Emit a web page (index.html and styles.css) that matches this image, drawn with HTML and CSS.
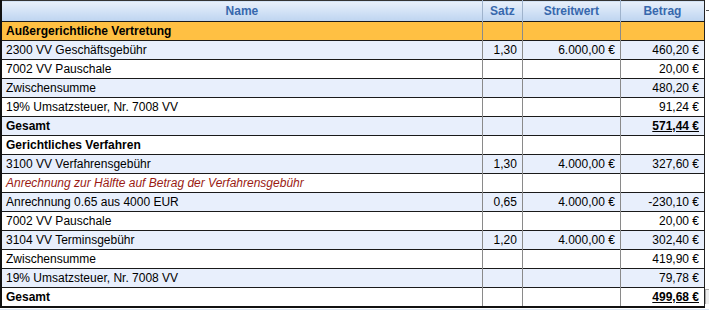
FILE: index.html
```html
<!DOCTYPE html>
<html>
<head>
<meta charset="utf-8">
<link rel="stylesheet" href="styles.css">
</head>
<body>
<div class="frame">
  <table class="grid">
    <colgroup>
      <col class="c-name"><col class="c-satz"><col class="c-wert"><col class="c-betrag">
    </colgroup>
    <thead>
      <tr><th>Name</th><th>Satz</th><th>Streitwert</th><th>Betrag</th></tr>
    </thead>
    <tbody>
      <tr class="group"><td>Außergerichtliche Vertretung</td><td></td><td></td><td></td></tr>
      <tr class="alt"><td>2300 VV Geschäftsgebühr</td><td class="num">1,30</td><td class="num">6.000,00 €</td><td class="num">460,20 €</td></tr>
      <tr><td>7002 VV Pauschale</td><td></td><td></td><td class="num">20,00 €</td></tr>
      <tr class="alt"><td>Zwischensumme</td><td></td><td></td><td class="num">480,20 €</td></tr>
      <tr><td>19% Umsatzsteuer, Nr. 7008 VV</td><td></td><td></td><td class="num">91,24 €</td></tr>
      <tr class="alt total"><td>Gesamt</td><td></td><td></td><td class="num"><u>571,44 €</u></td></tr>
      <tr class="total"><td>Gerichtliches Verfahren</td><td></td><td></td><td></td></tr>
      <tr class="alt"><td>3100 VV Verfahrensgebühr</td><td class="num">1,30</td><td class="num">4.000,00 €</td><td class="num">327,60 €</td></tr>
      <tr class="note"><td>Anrechnung zur Hälfte auf Betrag der Verfahrensgebühr</td><td></td><td></td><td></td></tr>
      <tr class="alt"><td>Anrechnung 0.65 aus 4000 EUR</td><td class="num">0,65</td><td class="num">4.000,00 €</td><td class="num">-230,10 €</td></tr>
      <tr><td>7002 VV Pauschale</td><td></td><td></td><td class="num">20,00 €</td></tr>
      <tr class="alt"><td>3104 VV Terminsgebühr</td><td class="num">1,20</td><td class="num">4.000,00 €</td><td class="num">302,40 €</td></tr>
      <tr><td>Zwischensumme</td><td></td><td></td><td class="num">419,90 €</td></tr>
      <tr class="alt"><td>19% Umsatzsteuer, Nr. 7008 VV</td><td></td><td></td><td class="num">79,78 €</td></tr>
      <tr class="total last"><td>Gesamt</td><td></td><td></td><td class="num"><u>499,68 €</u></td></tr>
    </tbody>
  </table>
  <div class="scroll">
    <span class="dash"></span>
    <span class="thumb"></span>
  </div>
</div>
<div class="strip"></div>
</body>
</html>
```
FILE: styles.css
```css
html, body {
  margin: 0;
  padding: 0;
  background: #ffffff;
}
body {
  font-family: "Liberation Sans", Arial, sans-serif;
  font-size: 12px;
  color: #000;
  width: 709px;
  height: 310px;
  overflow: hidden;
}
.frame {
  display: flex;
  align-items: flex-start;
}
.grid {
  border-collapse: collapse;
  table-layout: fixed;
  width: 705px;
  border-left: 2px solid #111;
  border-right: 1px solid #222;
  border-top: 1px solid #333;
  border-bottom: 2px solid #111;
}
.c-name { width: 481px; }
.c-satz { width: 40px; }
.c-wert { width: 98px; }
.c-betrag { width: 84px; }
th {
  height: 20px;
  padding: 0;
  background: linear-gradient(#e8f0fb, #bdd4f0);
  color: #3768ad;
  font-weight: bold;
  text-align: center;
  border-left: 1px solid #9fb3cc;
  border-bottom: 0;
}
th:first-child { border-left: 0; }
td {
  height: 18px;
  padding: 0 5px 0 4px;
  border-left: 1px solid #8a8a8a;
  border-top: 1px solid #1a1a1a;
  white-space: nowrap;
  overflow: hidden;
  background: #fff;
}
td:first-child { border-left: 0; }
tr.alt td { background: #e8effc; }
tr.group td {
  background: #ffc043;
  font-weight: bold;
}
tr.total td { font-weight: bold; }
tr.note td {
  font-style: italic;
  color: #9a1a12;
}
td.num { text-align: right; }
.scroll {
  width: 4px;
  height: 306px;
  display: flex;
  flex-direction: column;
  justify-content: space-between;
  padding-top: 10px;
  box-sizing: border-box;
}
.dash {
  display: block;
  width: 3px;
  height: 1px;
  background: #555;
  margin-left: 1px;
}
.thumb {
  display: block;
  width: 3px;
  height: 14px;
  border-top: 1px solid #aaa;
  border-left: 1px solid #aaa;
  background: #eee;
  margin-bottom: 2px;
}
.strip {
  height: 3px;
  margin-top: 1px;
  background: #dde7f3;
}
```
